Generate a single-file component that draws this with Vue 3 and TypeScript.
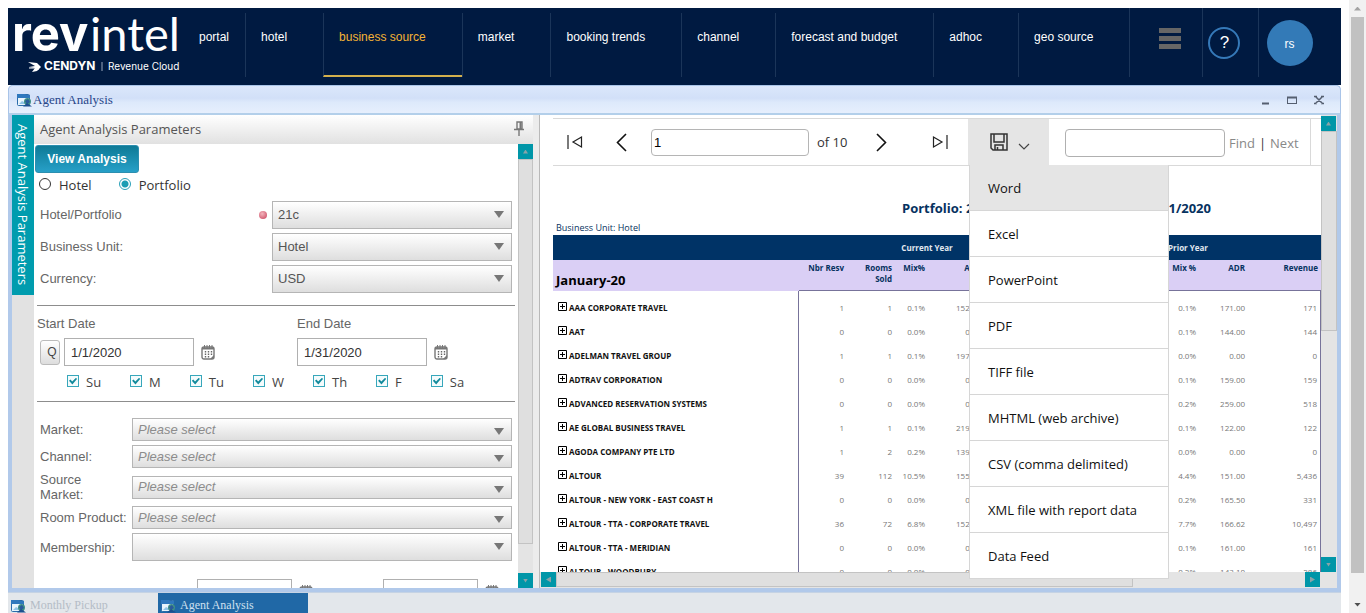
<script setup lang="ts">
import { ref } from 'vue'

const nav: string[] = ['hotel', 'business source', 'market', 'booking trends', 'channel', 'forecast and budget', 'adhoc', 'geo source']
const active = ref('business source')

const scope = ref('portfolio')
const mainFilters = ref([
  { id: 'portfolio', label: 'Hotel/Portfolio', value: '21c', required: true },
  { id: 'unit', label: 'Business Unit:', value: 'Hotel', required: false },
  { id: 'currency', label: 'Currency:', value: 'USD', required: false },
])
const startDate = ref('1/1/2020')
const endDate = ref('1/31/2020')
const days = ref(['Su', 'M', 'Tu', 'W', 'Th', 'F', 'Sa'].map((name) => ({ name, on: true })))
const segments = [
  { id: 'market', label: 'Market:', text: 'Please select', size: 'h27' },
  { id: 'channel', label: 'Channel:', text: 'Please select', size: 'h27' },
  { id: 'source', label: 'Source Market:', text: 'Please select', size: 'h34' },
  { id: 'room', label: 'Room Product:', text: 'Please select', size: 'h27' },
  { id: 'member', label: 'Membership:', text: '', size: 'h32' },
]

const page = ref('1')
const search = ref('')
const formats = ['Word', 'Excel', 'PowerPoint', 'PDF', 'TIFF file', 'MHTML (web archive)', 'CSV (comma delimited)', 'XML file with report data', 'Data Feed']

interface Row {
  name: string
  cur: string[]
  prior: string[]
}
const rows: Row[] = [
  { name: 'AAA CORPORATE TRAVEL', cur: ['1', '1', '0.1%', '152.00'], prior: ['0.1%', '171.00', '171'] },
  { name: 'AAT', cur: ['0', '0', '0.0%', '0.00'], prior: ['0.1%', '144.00', '144'] },
  { name: 'ADELMAN TRAVEL GROUP', cur: ['1', '1', '0.1%', '197.00'], prior: ['0.0%', '0.00', '0'] },
  { name: 'ADTRAV CORPORATION', cur: ['0', '0', '0.0%', '0.00'], prior: ['0.1%', '159.00', '159'] },
  { name: 'ADVANCED RESERVATION SYSTEMS', cur: ['0', '0', '0.0%', '0.00'], prior: ['0.2%', '259.00', '518'] },
  { name: 'AE GLOBAL BUSINESS TRAVEL', cur: ['1', '1', '0.1%', '219.00'], prior: ['0.1%', '122.00', '122'] },
  { name: 'AGODA COMPANY PTE LTD', cur: ['1', '2', '0.2%', '139.00'], prior: ['0.0%', '0.00', '0'] },
  { name: 'ALTOUR', cur: ['39', '112', '10.5%', '155.00'], prior: ['4.4%', '151.00', '5,436'] },
  { name: 'ALTOUR - NEW YORK - EAST COAST H', cur: ['0', '0', '0.0%', '0.00'], prior: ['0.2%', '165.50', '331'] },
  { name: 'ALTOUR - TTA - CORPORATE TRAVEL', cur: ['36', '72', '6.8%', '152.00'], prior: ['7.7%', '166.62', '10,497'] },
  { name: 'ALTOUR - TTA - MERIDIAN', cur: ['0', '0', '0.0%', '0.00'], prior: ['0.1%', '161.00', '161'] },
  { name: 'ALTOUR - WOODBURY', cur: ['0', '0', '0.0%', '0.00'], prior: ['0.2%', '143.10', '286'] },
]
</script>

<template>
  <svg class="defs" aria-hidden="true">
    <symbol id="calendar" viewBox="0 0 14 15">
      <rect x="1" y="2" width="12" height="12" rx="2" fill="#fff" stroke="#777" stroke-width="1.4" />
      <path d="M1 3.500H13" stroke="#777" stroke-width="2" />
      <path d="M3.500 0V3M6 0V3M8.500 0V3M11 0V3" stroke="#777" />
      <path d="M4.500 6V13M7.500 6V13M10.500 6V11" stroke="#666" stroke-width="1.400" stroke-dasharray="1.500 1" />
      <path d="M9 14L13 10V14Z" fill="#777" />
    </symbol>
    <symbol id="app-icon" viewBox="0 0 15 14">
      <rect x=".5" y="1.500" width="12" height="11" rx="1" fill="#e8f4fc" stroke="#2a6cab" />
      <path d="M0 1H8L9 2H13V5H0Z" fill="#2f78bd" />
      <path d="M2 11L5 8L7 9L11 5V11Z" fill="#8fc4e6" />
      <circle cx="10.500" cy="8.500" r="3.500" fill="#3f8f86" />
      <path d="M8 8L11 6L13 9L10 11Z" fill="#2a5a9c" />
      <path d="M6 13.500L10 10L15 13.500Z" fill="#1c4f8f" />
    </symbol>
  </svg>

  <div class="page">
    <div class="content">
      <header class="top">
        <svg class="logo" viewBox="0 0 178 77" role="img" aria-label="revintel by Cendyn Revenue Cloud">
          <text x="4" y="43" class="logo-a">rev</text>
          <text x="82" y="43" class="logo-b">intel</text>
          <path d="M20 54L29 55L33 59L29 63L24 64L27 60L21 59L27 58Z" fill="#fff" />
          <path d="M21 60L27 60M26 62L31 61" stroke="#fff" />
          <text x="36" y="62" class="logo-c">CENDYN</text>
          <path d="M94 54V63" stroke="#9aa7bd" />
          <text x="100" y="62" class="logo-d">Revenue Cloud</text>
        </svg>
        <nav class="nav">
          <a href="#" class="portal">portal</a>
          <a v-for="n in nav" :key="n" href="#" :class="{ active: active === n }" @click.prevent="active = n">{{ n }}</a>
        </nav>
        <div class="tools">
          <button class="burger" aria-label="Menu"><i></i><i></i><i></i></button>
          <div class="cell help-cell"><button class="help" aria-label="Help">?</button></div>
          <div class="cell user-cell"><button class="user">rs</button></div>
        </div>
      </header>

      <section class="window">
        <div class="titlebar">
          <svg class="ico"><use href="#app-icon" /></svg>
          <span>Agent Analysis</span>
          <div class="winbtns">
            <button aria-label="Minimize"><svg viewBox="0 0 10 10"><path d="M2 8.500H9" stroke="#555f70" stroke-width="2" /></svg></button>
            <button aria-label="Maximize"><svg viewBox="0 0 10 10"><rect x=".5" y="2.500" width="9" height="6" fill="none" stroke="#555f70" /><path d="M0 2.500H10" stroke="#555f70" stroke-width="2" /></svg></button>
            <button aria-label="Close"><svg viewBox="0 0 10 10"><path d="M1.500 1.500L8.500 8.500M8.500 1.500L1.500 8.500M0 1.500H3M7 1.500H10M0 8.500H3M7 8.500H10" stroke="#555f70" stroke-width="1.500" /></svg></button>
          </div>
        </div>

        <div class="body">
          <aside class="rail"><button class="tab">Agent Analysis Parameters</button></aside>

          <div class="panel">
            <div class="panel-head">
              <span>Agent Analysis Parameters</span>
              <svg class="pin" viewBox="0 0 10 16"><path d="M3 1H8V8H3ZM0 8.500H10M5 9V15" fill="none" stroke="#777" stroke-width="1.400" /><path d="M6.500 1V8" stroke="#777" stroke-width="2" /></svg>
            </div>
            <div class="panel-body">
              <form class="form" @submit.prevent>
                <button class="view">View Analysis</button>
                <div class="radios">
                  <label><input v-model="scope" type="radio" value="hotel" /><span>Hotel</span></label>
                  <label><input v-model="scope" type="radio" value="portfolio" /><span>Portfolio</span></label>
                </div>
                <div v-for="f in mainFilters" :key="f.id" class="filter">
                  <label :for="f.id">{{ f.label }}</label>
                  <i v-if="f.required" class="dot"></i>
                  <div class="combo tall">
                    <select :id="f.id" v-model="f.value"><option>{{ f.value }}</option></select>
                    <svg viewBox="0 0 10 7"><path d="M0 0H10L5 7Z" /></svg>
                  </div>
                </div>
                <hr />
                <div class="dates">
                  <div class="date">
                    <label for="start">Start Date</label>
                    <div class="line">
                      <button class="q" type="button">Q</button>
                      <input id="start" v-model="startDate" type="text" />
                      <svg class="cal"><use href="#calendar" /></svg>
                    </div>
                  </div>
                  <div class="date">
                    <label for="end">End Date</label>
                    <div class="line">
                      <input id="end" v-model="endDate" type="text" />
                      <svg class="cal"><use href="#calendar" /></svg>
                    </div>
                  </div>
                </div>
                <div class="days">
                  <label v-for="d in days" :key="d.name"><input v-model="d.on" type="checkbox" /><span>{{ d.name }}</span></label>
                </div>
                <hr />
                <div class="segments">
                  <div v-for="s in segments" :key="s.id" class="segment" :class="s.size">
                    <label :for="s.id">{{ s.label }}</label>
                    <div class="combo" :class="{ tall: !s.text }">
                      <select :id="s.id" class="placeholder"><option>{{ s.text }}</option></select>
                      <svg viewBox="0 0 10 7"><path d="M0 0H10L5 7Z" /></svg>
                    </div>
                  </div>
                </div>
                <div class="extra">
                  <input type="text" aria-label="From" /><svg class="cal"><use href="#calendar" /></svg>
                  <input type="text" aria-label="To" /><svg class="cal"><use href="#calendar" /></svg>
                </div>
              </form>
              <div class="vbar">
                <button class="sb" aria-label="Scroll up"><i class="up"></i></button>
                <div class="track"><div class="thumb params-thumb"></div></div>
                <button class="sb" aria-label="Scroll down"><i class="down"></i></button>
              </div>
            </div>
          </div>

          <div class="splitter"></div>

          <div class="viewer">
            <div class="viewer-main">
              <div class="toolbar">
                <button class="pg" aria-label="First page"><svg class="i16" viewBox="0 0 16 16"><path d="M1 1V15M14.500 3V13L6 8Z" fill="none" stroke="#222" stroke-width="1.200" /></svg></button>
                <button class="pg" aria-label="Previous page"><svg class="chev" viewBox="0 0 11 19"><path d="M10 1L1.500 9.500L10 18" fill="none" stroke="#111" stroke-width="1.600" /></svg></button>
                <input v-model="page" class="pageno" type="text" aria-label="Page" />
                <span class="of">of 10</span>
                <button class="pg next" aria-label="Next page"><svg class="chev" viewBox="0 0 11 19"><path d="M1 1L9.500 9.500L1 18" fill="none" stroke="#111" stroke-width="1.600" /></svg></button>
                <button class="pg last" aria-label="Last page"><svg class="i16" viewBox="0 0 16 16"><path d="M15 1V15M1.500 3V13L10 8Z" fill="none" stroke="#222" stroke-width="1.200" /></svg></button>
                <div class="export">
                  <button class="save" aria-label="Export">
                    <svg class="disk" viewBox="0 0 18 18"><path d="M1 1H17V17H3L1 15Z M4 1V9H14V1 M5 17V12H13V17 M7.500 14V17" fill="none" stroke="#333" stroke-width="1.500" /></svg>
                    <svg class="drop" viewBox="0 0 12 7"><path d="M1 1L6 6L11 1" fill="none" stroke="#444" stroke-width="1.200" /></svg>
                  </button>
                  <ul class="menu">
                    <li v-for="(f, i) in formats" :key="f"><button :class="{ hot: i === 0 }">{{ f }}</button></li>
                  </ul>
                </div>
                <div class="find">
                  <input v-model="search" type="text" aria-label="Find text" />
                  <a href="#">Find</a><b>|</b><a href="#">Next</a>
                </div>
              </div>

              <div class="report">
                <h1><span>Portfolio: 21c</span><span>1/1/2020 - 1/31/2020</span></h1>
                <p class="unit">Business Unit: Hotel</p>
                <table>
                  <colgroup>
                    <col class="c-name" /><col class="c-nbr" /><col class="c-rooms" /><col class="c-mix" /><col class="c-adr" />
                    <col class="c-rev" /><col class="c-rooms" /><col class="c-rooms" /><col class="c-pmix" /><col class="c-padr" /><col />
                  </colgroup>
                  <thead>
                    <tr class="years"><th></th><th colspan="5">Current Year</th><th colspan="5">Prior Year</th></tr>
                    <tr class="heads">
                      <th class="month">January-20</th><th>Nbr Resv</th><th>Rooms Sold</th><th>Mix%</th><th>ADR</th>
                      <th></th><th></th><th></th><th>Mix %</th><th>ADR</th><th>Revenue</th>
                    </tr>
                  </thead>
                  <tbody>
                    <tr class="gap"><td></td><td colspan="10"></td></tr>
                    <tr v-for="r in rows" :key="r.name">
                      <td class="name"><span><svg class="plus" viewBox="0 0 9 9"><path d="M.5 .5H8.500V8.500H.5ZM2 4.500H7M4.500 2V7" fill="none" stroke="#000" /></svg>{{ r.name }}</span></td>
                      <td v-for="(c, i) in r.cur" :key="'c' + i">{{ c }}</td>
                      <td></td><td></td><td></td>
                      <td v-for="(c, i) in r.prior" :key="'p' + i">{{ c }}</td>
                    </tr>
                  </tbody>
                </table>
              </div>

              <div class="hbar">
                <button class="sb" aria-label="Scroll left"><i class="left"></i></button>
                <div class="track"><div class="thumb report-hthumb"></div></div>
                <button class="sb" aria-label="Scroll right"><i class="right"></i></button>
              </div>
            </div>
            <div class="vbar report-vbar">
              <button class="sb" aria-label="Scroll up"><i class="up"></i></button>
              <div class="track"><div class="thumb report-thumb"></div></div>
              <button class="sb" aria-label="Scroll down"><i class="down"></i></button>
            </div>
          </div>
        </div>
      </section>

      <footer class="taskbar">
        <button class="task"><svg class="ico"><use href="#app-icon" /></svg>Monthly Pickup</button>
        <button class="task on"><svg class="ico"><use href="#app-icon" /></svg>Agent Analysis</button>
      </footer>
    </div>

    <div class="outer">
      <button aria-label="Page up"><i class="up dim"></i></button>
      <div class="outer-track"><div class="outer-thumb"></div></div>
      <button aria-label="Page down"><i class="down"></i></button>
    </div>
  </div>
</template>

<style>
html, body { background: #fff; }
body { overflow: hidden; }
</style>

<style scoped>
* { box-sizing: border-box; }
button, input, select { font: inherit; margin: 0; }
button { border: 0; padding: 0; background: none; color: inherit; cursor: pointer; }
a { color: inherit; text-decoration: none; }
.defs { position: absolute; width: 0; height: 0; }

.page { display: flex; height: 100vh; overflow: hidden; font-family: "Liberation Sans", Arial, sans-serif; font-size: 13px; color: #666; }
.content { flex: 1; min-width: 0; display: flex; flex-direction: column; padding: 8px 8px 0; }

.top { display: flex; height: 77px; flex: none; background: #001a41; color: #fff; font-size: 12px; }
.logo { width: 178px; height: 77px; flex: none; fill: #fff; }
.logo-a { font: 700 49px Inter, sans-serif; }
.logo-b { font: 400 47px Lato, sans-serif; }
.logo-c { font: 700 12px Inter, sans-serif; }
.logo-d { font: 400 10px Inter, sans-serif; }
.nav { display: flex; padding: 5px 0 8px; }
.nav a { display: block; padding: 17px 36px 0 15px; line-height: 14px; border-left: 1px solid #1b3559; white-space: nowrap; }
.nav .portal { border-left: 0; padding: 17px 16px 0 13px; }
.nav .active { color: #f5b335; border-bottom: 2px solid #d3b04d; }
.tools { display: flex; margin-left: auto; padding-bottom: 8px; }
.burger { width: 73px; padding: 0 0 8px 29px; display: flex; flex-direction: column; justify-content: center; gap: 3px; }
.nav + .tools .burger { border-left: 1px solid #1b3559; }
.burger i { width: 22px; height: 5px; background: #666; }
.cell { border-left: 1px solid #1b3559; display: flex; align-items: center; }
.help-cell { width: 56px; padding-left: 5px; }
.user-cell { width: 83px; padding-left: 8px; }
.help { width: 32px; height: 32px; border: 2px solid #3579b8; border-radius: 50%; font-size: 17px; }
.user { width: 46px; height: 46px; border-radius: 50%; background: #337ab7; font-size: 12px; padding: 3px 2px 0 0; }

.window { flex: 1; min-height: 0; display: flex; flex-direction: column; border: solid #b1c9ea; border-width: 0 4px 4px; border-radius: 5px 5px 0 0; }
.titlebar { flex: none; height: 30px; margin: 0 -4px; padding: 0 16px 0 8px; display: flex; align-items: center; gap: 1px; border: 1px solid #a9c4e8; border-bottom: 2px solid #b3cfea; border-radius: 5px 5px 0 0; background: linear-gradient(#dbe7fb 0, #d2e0f8 45%, #dde9fb 60%, #e6effd 100%); font: 13px "Liberation Serif", "Times New Roman", serif; color: #28478a; }
.ico { width: 15px; height: 14px; flex: none; }
.winbtns { margin-left: auto; display: flex; gap: 17px; }
.winbtns svg { width: 10px; height: 10px; display: block; }
.body { flex: 1; min-height: 0; display: flex; background: #fff; }

.rail { width: 22px; flex: none; background: #e2e2e2; }
.tab { width: 22px; height: 180px; background: #009cae; color: #fff; writing-mode: vertical-rl; font: 13px "Open Sans", sans-serif; text-align: center; }
.panel { width: 499px; flex: none; display: flex; flex-direction: column; min-height: 0; }
.panel-head { flex: none; height: 29px; padding: 0 9px 1px 6px; display: flex; align-items: center; justify-content: space-between; background: linear-gradient(#fff, #e1e1e1); font: 13px "Open Sans", sans-serif; color: #555; }
.pin { width: 10px; height: 16px; }
.panel-body { flex: 1; min-height: 0; display: flex; }
.form { flex: 1; min-width: 0; overflow: hidden; padding: 1px 3px 0 1px; }
.view { display: block; width: 104px; height: 28px; border-radius: 3px; background: linear-gradient(#0e7a96, #27a0c8); color: #fff; font: 700 12px "Liberation Sans", sans-serif; border: 1px solid #2c8fb0; }
.radios { display: flex; gap: 27px; padding: 1px 4px 0; height: 27px; font: 13px "Open Sans", sans-serif; color: #333; }
.radios label { display: flex; align-items: center; height: 20px; gap: 8px; }
.radios span { padding-top: 1px; }
input[type="radio"] { appearance: none; width: 12px; height: 12px; border: 1px solid #333; border-radius: 50%; background: #fff; }
input[type="radio"]:checked { border-color: #2aa0b8; background: radial-gradient(circle, #1c9db3 0 3px, #fff 4px); }
.filter { display: flex; align-items: center; height: 32px; padding: 0 3px 0 5px; }
.filter label { flex: 1; padding-bottom: 4px; }
.dot { width: 8px; height: 8px; margin: 0 5px 3px 0; border-radius: 50%; background: radial-gradient(circle at 40% 35%, #f3b5bd, #c8405a); }
.combo { position: relative; width: 240px; height: 23px; }
.combo.tall { height: 28px; }
.filter .combo { align-self: flex-start; margin-top: 1px; }
.combo select { appearance: none; width: 100%; height: 100%; padding: 0 24px 0 5px; border: 1px solid #b5b5b5; border-radius: 0; background: linear-gradient(#fff, #dedede); color: #555; line-height: 18px; }
.combo select.placeholder { font-style: italic; color: #8c8c8c; }
.combo svg { position: absolute; right: 8px; bottom: 6px; width: 10px; height: 7px; fill: #777; pointer-events: none; }
.combo.tall svg { bottom: 11px; }
hr { height: 1px; margin: 0 0 0 2px; border: 0; background: #8d8d8d; }
.filter + hr { margin-top: 9px; }
.dates { display: flex; padding: 10px 0 0 2px; height: 61px; }
.date { width: 260px; flex: none; }
.date + .date { width: 200px; }
.date label { display: block; line-height: 16px; margin-bottom: 6px; }
.line { display: flex; align-items: center; height: 28px; }
.line input { width: 130px; height: 28px; padding: 0 6px; border: 1px solid #b0b0b0; color: #333; }
.cal { width: 14px; height: 15px; margin-left: 7px; flex: none; }
.q { width: 20px; height: 25px; margin: 0 4px 0 3px; border: 1px solid #bbb; border-radius: 3px; background: linear-gradient(#fff, #ddd); font-size: 12px; color: #444; padding-left: 4px; }
.days { display: flex; gap: 29px; padding: 7px 0 0 32px; height: 34px; font: 13px "Open Sans", sans-serif; color: #444; }
.days label { display: flex; gap: 7px; height: 18px; }
.days span { line-height: 17px; }
input[type="checkbox"] { appearance: none; width: 12px; height: 12px; margin-top: 1px; border: 1px solid #37a7bb; background: #f4fbfc; display: grid; place-items: center; }
input[type="checkbox"]:checked::before { content: ""; width: 8px; height: 7px; background: #128a9c; clip-path: polygon(0 45%, 18% 30%, 40% 58%, 88% 5%, 100% 22%, 42% 100%); }
.segments { padding: 14px 3px 0 5px; }
.segment { display: flex; align-items: center; }
.segment label { width: 92px; flex: none; padding-right: 5px; line-height: 15px; white-space: nowrap; }
.segment.h34 label { white-space: normal; }
.segment .combo { flex: 1; width: auto; }
.h27 { height: 27px; }
.h34 { height: 34px; }
.h32 { height: 32px; }
.extra { display: flex; align-items: flex-start; padding: 16px 0 0 162px; }
.extra input { width: 95px; height: 28px; border: 1px solid #b0b0b0; flex: none; }
.extra .cal { margin-top: 6px; }
.extra .cal + input { margin-left: 70px; }

.vbar { width: 15px; flex: none; display: flex; flex-direction: column; background: #e4e4e4; }
.report-vbar { width: 16px; padding: 1px 0 16px; }
.hbar { height: 16px; flex: none; display: flex; padding: 0 1px 1px; background: #e4e4e4; }
.track { flex: 1; min-width: 0; min-height: 0; }
.sb { width: 15px; height: 15px; flex: none; background: #0096a8; display: grid; place-items: center; }
.up, .down, .left, .right { width: 5px; height: 4px; background: #8aa3a8; }
.up { clip-path: polygon(50% 0, 100% 100%, 0 100%); }
.down { clip-path: polygon(0 0, 100% 0, 50% 100%); }
.left { clip-path: polygon(100% 0, 100% 100%, 0 50%); height: 6px; }
.right { clip-path: polygon(0 0, 100% 50%, 0 100%); height: 6px; }
.thumb { background: #dfdfdf; border: 1px solid #c3c3c3; }
.params-thumb { height: 93%; }
.report-thumb { height: 47%; }
.report-hthumb { height: 100%; width: 77%; }
.splitter { width: 7px; flex: none; background: #ececec; border-right: 1px solid #b9b9b9; }

.viewer { flex: 1; min-width: 0; display: flex; }
.viewer-main { flex: 1; min-width: 0; display: flex; flex-direction: column; padding-top: 3px; }
.toolbar { flex: none; height: 48px; margin-left: 13px; display: flex; align-items: center; border: solid #d9d9d9; border-width: 1px 0; font: 13px "Open Sans", sans-serif; color: #333; }
.pg { width: 16px; margin-left: 14px; display: grid; place-items: center; }
.pg + .pg { margin-left: 30px; margin-right: 22px; }
.i16 { width: 16px; height: 16px; }
.chev { width: 11px; height: 19px; }
.pageno { width: 158px; height: 27px; padding: 0 2px; border: 1px solid #b5b5b5; border-radius: 4px; font-family: "Liberation Sans", sans-serif; }
.of { margin-left: 8px; width: 32px; white-space: nowrap; }
.pg.next { margin: 0 0 0 24px; }
.pg.last { margin: 0 20px 0 43px; }
.export { position: relative; width: 81px; height: 46px; background: #e5e5e5; }
.save { width: 100%; height: 100%; display: flex; align-items: center; padding-left: 22px; gap: 10px; }
.disk { width: 18px; height: 18px; }
.drop { width: 12px; height: 7px; margin-top: 8px; }
.menu { position: absolute; z-index: 2; top: 46px; left: 1px; width: 200px; margin: 0; padding: 0; list-style: none; background: #fff; border: 1px solid #d6d6d6; border-top: 0; }
.menu li + li { border-top: 1px solid #d6d6d6; }
.menu button { display: block; width: 100%; height: 45px; padding-left: 18px; text-align: left; color: #111; }
.menu .hot { background: #e5e5e5; }
.find { flex: 1; align-self: stretch; margin-right: 10px; border-right: 1px solid #d9d9d9; display: flex; align-items: center; padding: 1px 0 0 16px; gap: 4px; color: #888; }
.find input { width: 160px; height: 28px; border: 1px solid #b0b0b0; border-radius: 4px; }
.find b { font-weight: 400; color: #333; }

.report { flex: 1; min-height: 0; overflow: hidden; padding-left: 13px; font-family: "Open Sans", sans-serif; color: #063260; }
h1 { display: flex; justify-content: space-between; width: 309px; margin: 32px 110px 0 auto; font-size: 13px; line-height: 20px; white-space: nowrap; }
.unit { margin: 3px 0 0; padding-left: 3px; font-size: 9px; line-height: 14px; }
table { width: 100%; table-layout: fixed; border-collapse: separate; border-spacing: 0; font-size: 8px; line-height: 11px; }
.c-name { width: 246px; } .c-nbr { width: 48px; } .c-rooms { width: 48px; } .c-mix { width: 33px; } .c-adr { width: 56px; }
.c-rev { width: 74px; } .c-pmix { width: 45px; } .c-padr { width: 49px; }
th, td { padding: 0 3px 0 0; text-align: right; }
.years th { height: 25px; background: #003366; color: #e2e8f0; text-align: center; }
.heads th { height: 31px; background: #dacff5; vertical-align: top; padding-top: 2px; border-bottom: 1px solid #77739a; }
.heads .month { vertical-align: bottom; text-align: left; padding-left: 3px; font-size: 13px; line-height: 19px; color: #000; border-bottom-color: #dacff5; }
td { height: 24px; color: #777; }
td:first-child { border-right: 1px solid #77739a; }
td:last-child { border-right: 1px solid #77739a; }
.gap td { height: 4px; }
.name { text-align: left; font-weight: 700; color: #111; white-space: nowrap; }
.name span { display: flex; align-items: center; padding-left: 5px; gap: 2px; }
.plus { width: 9px; height: 9px; margin-bottom: 2px; }

.taskbar { flex: none; height: 21px; display: flex; background: #e3e7eb; border-top: 1px solid #c5d3e4; }
.task { width: 150px; display: flex; align-items: center; gap: 4px; padding: 5px 3px 0; font: 12px "Liberation Serif", serif; color: #b4bcc6; }
.task.on { background: #2068a6; color: #cfe0f0; }

.outer { width: 17px; flex: none; display: flex; flex-direction: column; background: #f1f1f1; }
.outer button { height: 17px; display: grid; place-items: center; }
.outer button i { width: 7px; background: #505050; }
.outer button .dim { background: #a3a3a3; }
.outer-track { flex: 1; padding: 0 2px; }
.outer-thumb { height: 96%; background: #c1c1c1; }
</style>
